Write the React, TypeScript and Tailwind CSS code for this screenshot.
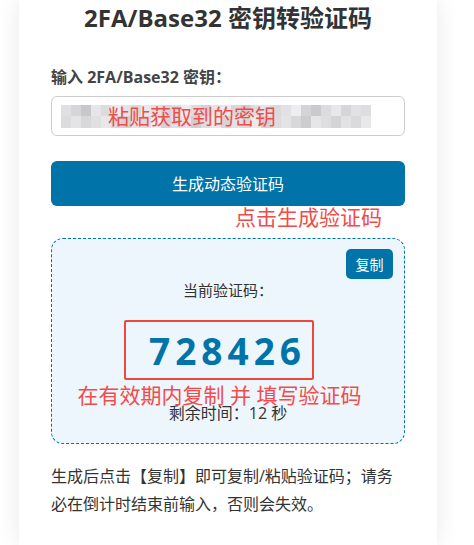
import React from "react";

const FONT = `"Open Sans", "Noto Sans CJK SC", sans-serif`;

// blurred secret key — rows of grey mosaic tiles
const TILES = [
  [224, 214, 200, 230, 220, 236, 228, 218, 232, 226, 214, 222, 236, 220, 210, 228, 234, 216, 206, 222, 230, 218, 226, 238, 212, 202, 220, 232, 214, 226, 222],
  [220, 228, 216, 224, 232, 218, 210, 226, 220, 236, 212, 224, 228, 206, 222, 232, 214, 226, 218, 234, 210, 220, 228, 216, 204, 230, 222, 212, 226, 218, 232],
];

function Mosaic() {
  return (
    <div className="flex flex-col">
      {TILES.map((row, i) => (
        <div key={i} className="flex">
          {row.map((g, j) => (
            <div key={j} className="h-[11.5px] w-[10px]" style={{ background: `rgb(${g},${g},${g + 2})` }} />
          ))}
        </div>
      ))}
    </div>
  );
}

export default function App() {
  return (
    <div className="h-[545px] w-[474px] overflow-hidden bg-white" style={{ fontFamily: FONT }}>
      <div className="ml-[19px] h-full w-[418px] bg-white px-[32px] shadow-[0_0_22px_rgba(0,0,0,0.09)]">
        <h1 className="pt-[2px] text-center text-[24px] font-bold leading-[32px] text-[#333]">2FA/Base32 密钥转验证码</h1>

        <div className="mt-[33px] text-[16px] font-bold leading-[20px] text-[#444]">输入 2FA/Base32 密钥：</div>

        <div className="relative mt-[9px] flex h-[40px] items-center rounded-[6px] border border-[#ccc] bg-white pl-[9px]">
          <Mosaic />
          <span className="absolute left-[56px] top-[6px] text-[21px] leading-[26px] text-[#f24b4b]">粘贴获取到的密钥</span>
        </div>

        <button className="mt-[25px] flex h-[45px] w-full items-center justify-center rounded-[6px] bg-[#0073a8] text-[16px] text-white">
          生成动态验证码
        </button>

        <div className="flex h-[32px] justify-end pr-[23px]">
          <span className="-mt-[1px] text-[21px] leading-[24px] text-[#f24b4b]">点击生成验证码</span>
        </div>

        <div className="relative h-[206px] rounded-[12px] border border-dashed border-[#0073a8] bg-[#eef6fd]">
          <button className="absolute right-[11px] top-[10px] flex h-[30px] w-[47px] items-center justify-center rounded-[5px] bg-[#0073a8] text-[14px] text-white">
            复制
          </button>
          <div className="flex flex-col items-center pt-[41px]">
            <div className="text-[15px] leading-[20px] text-[#333]">当前验证码：</div>
            <div className="mr-[19px] mt-[20px] flex h-[60px] w-[190px] items-center justify-center rounded-[2px] border-2 border-[#ef473a] pl-[18px]">
              <span className="text-[37px] font-bold leading-none tracking-[5px] text-[#0073a8]">728426</span>
            </div>
            <div className="mr-[17px] mt-[3px] text-[21px] leading-[24px] text-[#f24b4b]">在有效期内复制 并 填写验证码</div>
            <div className="-mt-[4px] text-[16px] leading-[20px] text-[#333]">剩余时间：12 秒</div>
          </div>
        </div>

        <p className="mt-[18px] text-[16px] leading-[28px] text-[#333]">
          生成后点击【复制】即可复制/粘贴验证码；请务必在倒计时结束前输入，否则会失效。
        </p>
      </div>
    </div>
  );
}
